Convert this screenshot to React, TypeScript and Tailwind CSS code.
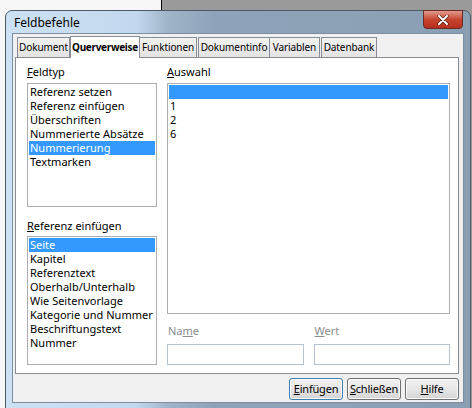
import React from 'react';

const feldtyp = ['Referenz setzen', 'Referenz einfügen', 'Überschriften', 'Nummerierte Absätze', 'Nummerierung', 'Textmarken'];
const auswahl = ['', '1', '2', '6'];
const referenz = ['Seite', 'Kapitel', 'Referenztext', 'Oberhalb/Unterhalb', 'Wie Seitenvorlage', 'Kategorie und Nummer', 'Beschriftungstext', 'Nummer'];

function ListBox({ items, selected, className }: { items: string[]; selected: number; className: string }) {
  return (
    <div className={`border border-[#abadb3] bg-white p-px ${className}`}>
      {items.map((item, i) => (
        <div
          key={i}
          className={`h-[14px] pl-px leading-[14px] whitespace-nowrap ${i === selected ? 'bg-[#3399ff] text-white' : 'text-black'}`}
        >
          {item}
        </div>
      ))}
    </div>
  );
}

function Button({ label, isDefault }: { label: string; isDefault?: boolean }) {
  return (
    <button
      className={`h-[22px] w-[54px] rounded-[3px] border bg-gradient-to-b from-[#f2f2f2] via-[#e6e6e6] to-[#d4d4d4] leading-[20px] tracking-[-0.2px] text-black shadow-[inset_0_0_0_1px_#fcfcfc] ${
        isDefault ? 'border-[#3c7fb1]' : 'border-[#707070]'
      }`}
    >
      <span className="underline">{label[0]}</span>
      {label.slice(1)}
    </button>
  );
}

function Tab({ label, width }: { label: string; width: string }) {
  return (
    <div
      className={`flex h-[20px] items-center justify-center whitespace-nowrap border border-b-0 border-[#898c95] bg-gradient-to-b from-[#f2f2f2] to-[#e3e3e3] text-[10px] tracking-[-0.1px] ${width}`}
    >
      {label}
    </div>
  );
}

export default function App() {
  return (
    <div className="relative h-[408px] w-[472px] overflow-hidden bg-[#f4f4f4] text-[11px] font-['Noto_Sans',sans-serif]">
      {/* desktop behind the dialog */}
      <div className="flex h-full">
        <div className="w-[161px] bg-[#f7f7f7]" />
        <div className="w-px bg-black" />
        <div className="flex-1 bg-[#9a9a9a]" />
      </div>

      {/* dialog window */}
      <div className="absolute left-[5px] top-[10px] h-[400px] w-[466px] rounded-t-[7px] border border-[#4d5a66] bg-[linear-gradient(90deg,#cde1f4_0%,#c2d8ee_28%,#9fb4c9_35%,#8ea3b9_45%,#8b9fb4_100%)] px-[6px] pb-[6px]">
        {/* title bar */}
        <div className="relative flex h-[22px] items-center">
          <span className="pl-[2px] pt-[2px] text-[12px] text-black">Feldbefehle</span>
          <div className="absolute right-[1px] top-[-1px] flex h-[19px] w-[40px] items-center justify-center rounded-b-[4px] border border-[#6b2a22] bg-gradient-to-b from-[#e09a8e] via-[#c7442f] to-[#b5301c]">
            <svg width="12" height="10" viewBox="0 0 12 10">
              <path d="M2 1 L10 9 M10 1 L2 9" stroke="#4a1a12" strokeWidth="3.2" strokeLinecap="round" />
              <path d="M2 1 L10 9 M10 1 L2 9" stroke="#ffffff" strokeWidth="2" strokeLinecap="round" />
            </svg>
          </div>
        </div>

        {/* client area */}
        <div className="h-[370px] border border-[#7c8ea0] bg-[#f0f0f0] px-[2px] pt-[2px]">
          {/* tab strip */}
          <div className="flex h-[21px] items-end pl-[2px]">
            <Tab label="Dokument" width="w-[53px]" />
            <div className="relative z-10 mb-[-1px] flex h-[22px] w-[70px] items-center justify-center whitespace-nowrap border border-b-0 border-[#898c95] bg-white text-[10px] font-bold tracking-[-0.3px]">
              Querverweise
            </div>
            <Tab label="Funktionen" width="w-[57px] border-l-0" />
            <Tab label="Dokumentinfo" width="w-[72px] ml-[1px]" />
            <Tab label="Variablen" width="w-[50px] border-l-0" />
            <Tab label="Datenbank" width="w-[56px] ml-[1px]" />
          </div>

          {/* tab panel */}
          <div className="flex h-[317px] w-[444px] gap-[10px] border border-[#898c95] bg-white pl-[11px] pt-[7px]">
            <div className="flex w-[130px] flex-col">
              <div className="h-[18px] leading-[14px]">
                <span className="underline">F</span>eldtyp
              </div>
              <ListBox items={feldtyp} selected={4} className="h-[124px]" />
              <div className="mt-[12px] h-[17px] leading-[14px]">
                <span className="underline">R</span>eferenz einfügen
              </div>
              <ListBox items={referenz} selected={0} className="h-[129px]" />
            </div>

            <div className="flex w-[283px] flex-col">
              <div className="h-[18px] leading-[14px]">
                <span className="underline">A</span>uswahl
              </div>
              <ListBox items={auswahl} selected={0} className="h-[231px]" />
              <div className="mt-[10px] grid grid-cols-2 gap-x-[10px] text-[#8d8d8d]">
                <div className="h-[20px] pl-px leading-[14px]">
                  Na<span className="underline">m</span>e
                </div>
                <div className="h-[20px] pl-px leading-[14px]">
                  <span className="underline">W</span>ert
                </div>
                <div className="h-[21px] border border-[#b8c3d0] bg-white" />
                <div className="h-[21px] border border-[#b8c3d0] bg-white" />
              </div>
            </div>
          </div>

          {/* buttons */}
          <div className="mt-[4px] flex justify-end gap-[4px] pr-[2px]">
            <Button label="Einfügen" isDefault />
            <Button label="Schließen" />
            <Button label="Hilfe" />
          </div>
        </div>
      </div>
    </div>
  );
}
